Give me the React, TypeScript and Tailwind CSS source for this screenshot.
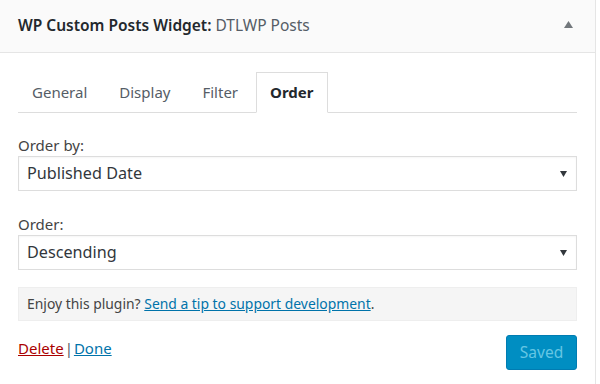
import React from 'react';

const tabs = ['General', 'Display', 'Filter', 'Order'];

function Caret() {
  return (
    <svg width="7" height="6" viewBox="0 0 7 6" className="shrink-0">
      <path d="M0 0H7L3.5 6Z" fill="#32373c" />
    </svg>
  );
}

function FakeSelect({ value }: { value: string }) {
  return (
    <div className="flex h-[35px] items-center justify-between border border-[#ddd] bg-white pl-[8px] pr-[9px] shadow-[inset_0_1px_2px_rgba(0,0,0,0.04)]">
      <span className="text-[16.2px] text-[#32373c]">{value}</span>
      <Caret />
    </div>
  );
}

export default function App() {
  return (
    <div className="h-[384px] w-[600px] overflow-hidden bg-white font-['Noto_Sans',sans-serif]">
      <div className="h-full w-[596px] border-r border-[#e5e5e5]">
        {/* header */}
        <div className="flex h-[53px] items-center justify-between border-b border-[#e5e5e5] bg-[#fafafa] pl-[18px] pr-[22px]">
          <h3 className="text-[15.5px] font-semibold text-[#23282d]">
            WP Custom Posts Widget: <span className="font-normal text-[#555d66]">DTLWP Posts</span>
          </h3>
          <svg width="9" height="7" viewBox="0 0 9 7" className="mb-[3px]">
            <path d="M4.5 0L9 7H0Z" fill="#72777c" />
          </svg>
        </div>

        <div className="px-[18px]">
          {/* tabs */}
          <div className="mt-[19px] flex items-end gap-[4px] border-b border-[#ddd]">
            {tabs.map((t) =>
              t === 'Order' ? (
                <div
                  key={t}
                  className="-mb-px flex h-[41px] items-center border border-[#ddd] border-b-white bg-white px-[13px] text-[15px] font-bold text-[#23282d]"
                >
                  {t}
                </div>
              ) : (
                <div key={t} className="flex h-[40px] items-center px-[14px] text-[15px] text-[#555d66]">
                  {t}
                </div>
              )
            )}
          </div>

          {/* order by */}
          <label className="mt-[22px] block text-[15px] leading-[20px] text-[#444]">Order by:</label>
          <div className="mt-px">
            <FakeSelect value="Published Date" />
          </div>

          <label className="mt-[23px] block text-[15px] leading-[20px] text-[#444]">Order:</label>
          <div className="mt-px">
            <FakeSelect value="Descending" />
          </div>

          {/* tip */}
          <div className="mt-[17px] flex h-[34px] items-center border border-[#eee] bg-[#f5f5f5] px-[8px] text-[13.9px] text-[#444]">
            <span>
              Enjoy this plugin?{' '}
              <a href="#" className="text-[#0073aa] underline">
                Send a tip to support development
              </a>
              .
            </span>
          </div>

          {/* footer */}
          <div className="mt-[14px] flex items-start justify-between">
            <div className="mt-[2px] text-[15px] text-[#555d66]">
              <a href="#" className="text-[#a00] underline">Delete</a>
              <span className="mx-px">|</span>
              <a href="#" className="text-[#0073aa] underline">Done</a>
            </div>
            <button className="h-[35px] w-[71px] rounded-[3px] border border-[#007cb2] bg-[#008ec2] text-[15.5px] text-[#66c6e4]">
              Saved
            </button>
          </div>
        </div>
      </div>
    </div>
  );
}
